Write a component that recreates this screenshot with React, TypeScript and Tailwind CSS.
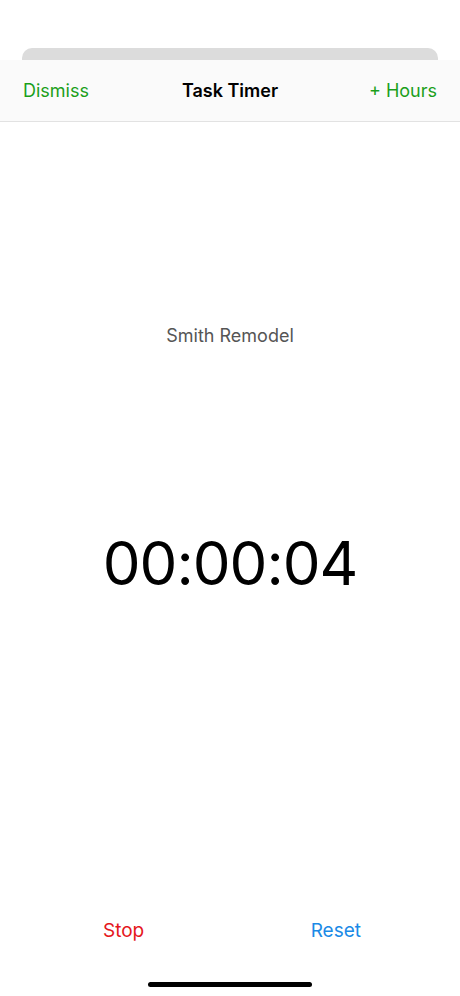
export default function App() {
  return (
    <div
      className="flex h-[996px] w-[460px] flex-col overflow-hidden bg-white"
      style={{ fontFamily: "Inter, 'Liberation Sans', sans-serif" }}
    >
      {/* card peeking behind the sheet */}
      <div className="h-[48px] shrink-0 bg-white" />
      <div className="mx-[22px] h-[14px] shrink-0 rounded-t-[10px] bg-[#dcdcdc]" />

      {/* sheet */}
      <div className="-mt-[2px] flex flex-1 flex-col bg-white">
        <header className="flex h-[62px] shrink-0 items-center justify-between border-b border-[#e2e2e2] bg-[#fafafa] px-[23px]">
          <button className="w-[90px] text-left text-[18px] text-[#1a9f1a]">Dismiss</button>
          <h1 className="text-[18px] font-semibold text-black">Task Timer</h1>
          <button className="w-[90px] text-right text-[18px] text-[#1a9f1a]">+ Hours</button>
        </header>

        <div className="flex flex-1 flex-col items-center">
          <p className="mt-[200px] text-[18px] text-[#555555]">Smith Remodel</p>
          <div className="mt-[184px] text-[60px] leading-none tracking-[-1px] text-black">00:00:04</div>
        </div>

        <div className="flex justify-between pb-[37px] pl-[103px] pr-[99px]">
          <button className="text-[19px] text-[#e5161c]">Stop</button>
          <button className="text-[19px] text-[#1b8ae6]">Reset</button>
        </div>

        <div className="flex justify-center pb-[9px]">
          <div className="h-[5px] w-[164px] rounded-full bg-black" />
        </div>
      </div>
    </div>
  );
}
